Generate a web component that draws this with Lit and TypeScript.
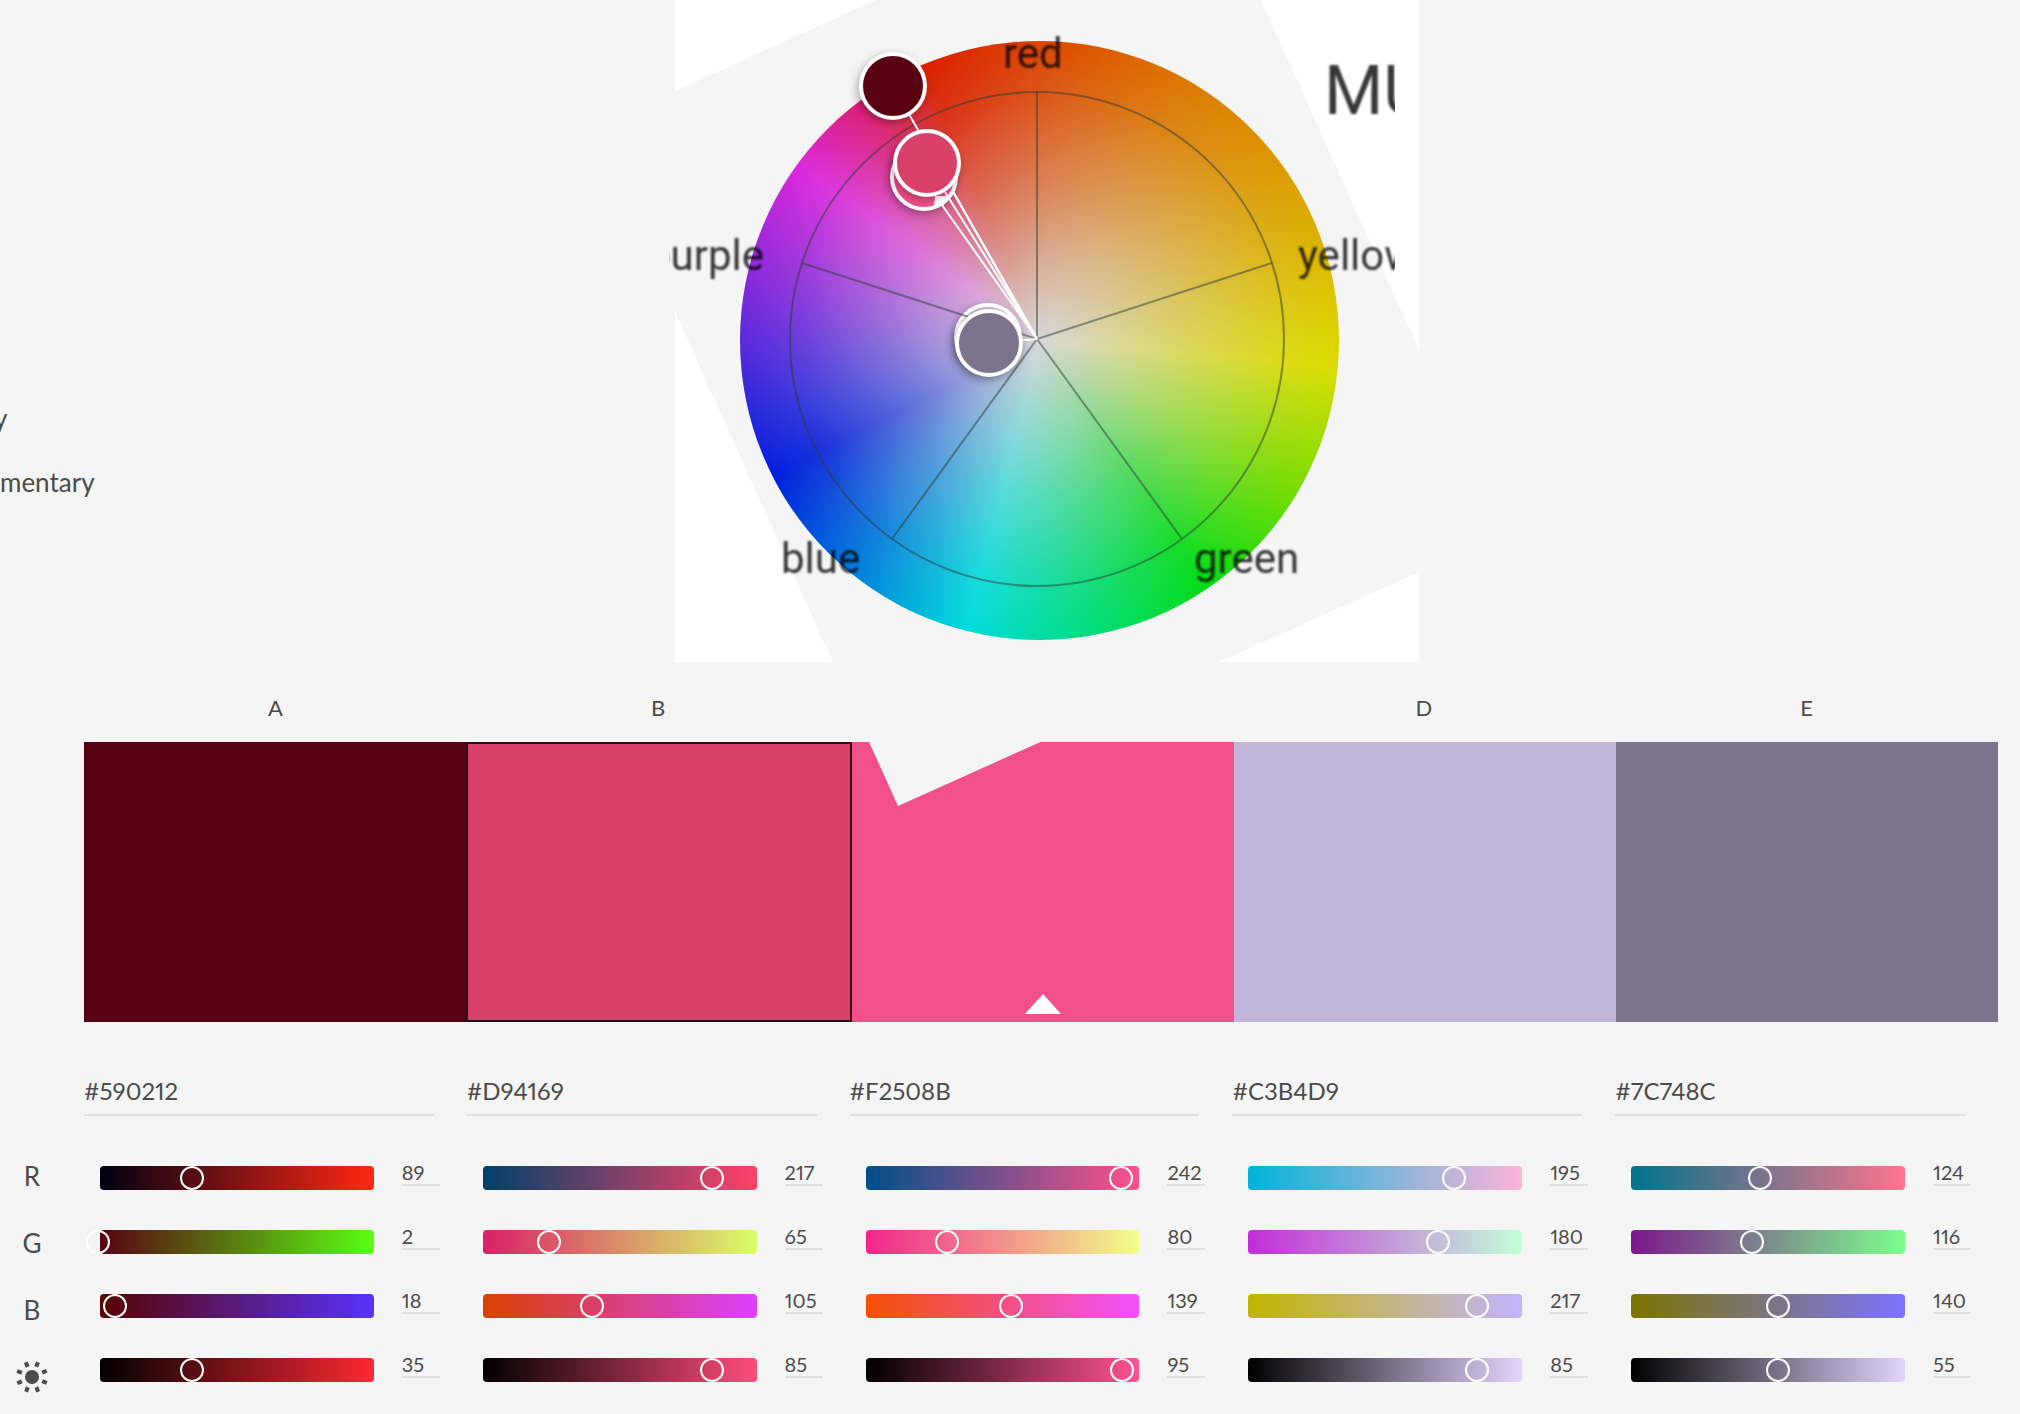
import { LitElement, html, svg, css } from "lit";
import { customElement, state } from "lit/decorators.js";

interface Channel {
  name: string;
  value: number;
  max: number;
  from: string;
  to: string;
}

interface Swatch {
  letter: string;
  hex: string;
  channels: Channel[];
}

const channels = (
  values: number[],
  ramps: [string, string][],
): Channel[] =>
  ["Red", "Green", "Blue", "Brightness"].map((name, i) => ({
    name,
    value: values[i],
    max: i === 3 ? 100 : 255,
    from: ramps[i][0],
    to: ramps[i][1],
  }));

const PALETTE: Swatch[] = [
  {
    letter: "A",
    hex: "#590212",
    channels: channels([89, 2, 18, 35], [
      ["#000012", "#ff2812"],
      ["#590212", "#59ff12"],
      ["#590200", "#5932ff"],
      ["#000000", "#ff2833"],
    ]),
  },
  {
    letter: "B",
    hex: "#D94169",
    channels: channels([217, 65, 105, 85], [
      ["#004169", "#ff4169"],
      ["#d92069", "#d9ff69"],
      ["#d94100", "#d941ff"],
      ["#000000", "#ff4d7b"],
    ]),
  },
  {
    letter: "",
    hex: "#F2508B",
    channels: channels([242, 80, 139, 95], [
      ["#00508b", "#ff508b"],
      ["#f2248b", "#f2ff8b"],
      ["#f25000", "#f250ff"],
      ["#000000", "#ff5492"],
    ]),
  },
  {
    letter: "D",
    hex: "#C3B4D9",
    channels: channels([195, 180, 217, 85], [
      ["#00b4d9", "#ffb4d9"],
      ["#c32cd9", "#c3ffd9"],
      ["#c3b400", "#c3b4ff"],
      ["#000000", "#e5d4ff"],
    ]),
  },
  {
    letter: "E",
    hex: "#7C748C",
    channels: channels([124, 116, 140, 55], [
      ["#00748c", "#ff748c"],
      ["#7c188c", "#7cff8c"],
      ["#7c7400", "#7c74ff"],
      ["#000000", "#e2d4ff"],
    ]),
  },
];

@customElement("color-wheel")
export class ColorWheel extends LitElement {
  static styles = css`
    :host {
      display: block;
      position: relative;
      z-index: 1;
      height: 662px;
      background: #ffffff;
      pointer-events: none;
    }
    .layer {
      position: absolute;
      inset: 0;
      width: 744px;
      height: 662px;
      overflow: visible;
    }
    .disc {
      position: absolute;
      left: 65px;
      top: 41px;
      width: 599px;
      height: 599px;
      border-radius: 50%;
      background:
        radial-gradient(
          closest-side,
          rgba(216, 216, 216, 1) 0%,
          rgba(216, 216, 216, 0.42) 50%,
          rgba(218, 218, 218, 0.12) 80%,
          rgba(220, 220, 220, 0) 100%
        ),
        conic-gradient(
          #dc4600 0deg,
          #dc7800 30deg,
          #dca500 62deg,
          #dcdc00 95deg,
          #78dc00 120deg,
          #00dc14 146deg,
          #00dc8c 174deg,
          #00dcdc 194deg,
          #0078dc 220deg,
          #001edc 243deg,
          #2828dc 256deg,
          #7828dc 278deg,
          #dc28dc 306deg,
          #dc1e78 322deg,
          #dc1e00 337deg,
          #dc4600 360deg
        );
    }
    .word {
      font-family: Roboto, "Liberation Sans", sans-serif;
      font-size: 42px;
      fill: #000000;
    }
    .title {
      font-size: 68px;
    }
    .words {
      opacity: 0.78;
      filter: blur(1px);
    }
    .spokes {
      fill: none;
      stroke: #2c3c38;
      stroke-opacity: 0.5;
      stroke-width: 2px;
    }
    .link {
      stroke: #ffffff;
      stroke-width: 2px;
    }
    .marker {
      stroke: #ffffff;
      stroke-width: 4px;
      filter: drop-shadow(-2px 3px 4px rgba(0, 0, 0, 0.3));
    }
  `;

  private marker(x: number, y: number, fill: string) {
    return svg`<circle class="marker" cx=${x} cy=${y} r="32" fill=${fill} />`;
  }

  render() {
    return html`
      <svg class="layer" viewBox="675 0 744 662" aria-hidden="true">
        <polygon
          fill="#f5f5f5"
          points="675,91 876,0 1261,0 1419,350 1419,572 898,806 675,312"
        />
      </svg>
      <div class="disc"></div>
      <svg class="layer" viewBox="675 0 744 662" role="img" aria-label="Color wheel">
        <defs>
          <clipPath id="frame">
            <rect x="669" y="0" width="726" height="662" />
          </clipPath>
        </defs>
        <g clip-path="url(#frame)">
          <g class="words">
            <text class="word" x="1003" y="68">red</text>
            <text class="word" x="1298" y="270">yellow</text>
            <text class="word" x="1194" y="573">green</text>
            <text class="word" x="781" y="573">blue</text>
            <text class="word" x="764" y="270" text-anchor="end">purple</text>
            <text class="word title" x="1324" y="114">MU</text>
          </g>
        </g>
        ${this.marker(988, 337, "#C3B4D9")}
        <g class="spokes">
          <circle cx="1037" cy="339" r="247" />
          <path
            d="M1037 92V339M1272 263L1037 339M1182 539L1037 339M892 539L1037 339M802 263L1037 339"
          />
        </g>
        <line class="link" x1="1037" y1="339" x2="989" y2="343" />
        ${this.marker(989, 343, "#7C748C")}
        <line class="link" x1="1037" y1="339" x2="893" y2="86" />
        ${this.marker(924, 177, "#F2508B")}
        <line class="link" x1="1037" y1="339" x2="942" y2="205" />
        <line class="link" x1="1037" y1="339" x2="945" y2="192" />
        <line class="link" x1="1037" y1="339" x2="952" y2="190" />
        <path fill="#ffffff" d="M935 196H952L943 205L934 206Z" />
        ${this.marker(927, 163, "#D94169")}
        ${this.marker(893, 86, "#590212")}
      </svg>
    `;
  }
}

@customElement("app-root")
export class AppRoot extends LitElement {
  static styles = css`
    :host {
      display: block;
      min-height: 100vh;
      overflow: hidden;
      background: #f5f5f5;
      color: #4b4b4b;
      font-family: Lato, "Open Sans", sans-serif;
      font-size: 24px;
      font-variant-numeric: proportional-nums;
    }
    * {
      box-sizing: border-box;
    }
    .stage {
      display: grid;
      grid-template-columns: minmax(0, 675fr) 744px minmax(0, 601fr);
    }
    .rules {
      margin: 0;
      padding: 386px 0 0;
      list-style: none;
      font-size: 26px;
      line-height: 64px;
    }
    .rule-short {
      margin-left: -6px;
    }
    .letters,
    .swatches {
      padding: 0 22px 0 84px;
    }
    .letters {
      display: grid;
      grid-template-columns: repeat(5, 1fr);
      height: 80px;
      padding-top: 10px;
      align-items: center;
      text-align: center;
      font-size: 22px;
    }
    .swatches {
      display: flex;
    }
    .swatch {
      display: flex;
      flex: 1 1 0;
      box-sizing: content-box;
      height: 280px;
      padding: 0;
      border: 0;
      align-items: flex-end;
      justify-content: center;
    }
    .selected {
      height: 276px;
      border: 2px solid #330a18;
    }
    .base {
      margin-bottom: 8px;
    }
    .controls {
      display: flex;
      padding-right: 22px;
    }
    .names {
      width: 64px;
      margin-right: 20px;
      padding-top: 120px;
      font-size: 26px;
    }
    .name {
      display: flex;
      height: 67px;
      align-items: center;
      justify-content: center;
    }
    .columns {
      display: grid;
      flex: 1;
      grid-template-columns: repeat(5, minmax(0, 1fr));
    }
    .column {
      display: flex;
      flex-direction: column;
      padding-top: 50px;
    }
    .field {
      padding: 0;
      border: 0;
      border-bottom: 2px solid #e0e0e0;
      border-radius: 0;
      outline: none;
      background: none;
      color: inherit;
      font: inherit;
      font-variant-numeric: inherit;
    }
    .hex {
      height: 44px;
      margin-right: 33px;
      padding-bottom: 6px;
    }
    .rows {
      display: grid;
      gap: 40px;
      padding: 50px 27px 32px 16px;
    }
    .row {
      display: flex;
      height: 24px;
      gap: 28px;
    }
    .track {
      flex: 1;
      height: 24px;
      border-radius: 4px;
    }
    .range {
      display: block;
      width: calc(100% + 24px);
      height: 24px;
      margin: 0 0 0 -16px;
      appearance: none;
      background: none;
      outline: none;
    }
    .range::-webkit-slider-thumb {
      appearance: none;
      width: 24px;
      height: 24px;
      border: 2px solid #ffffff;
      border-radius: 50%;
      background: transparent;
    }
    .value {
      width: 38px;
      height: 28px;
      margin-top: -8px;
      padding-top: 2px;
      font-size: 20px;
    }
  `;

  @state() private palette: Swatch[] = PALETTE;

  private onInput(channel: Channel, event: Event) {
    channel.value = Number((event.target as HTMLInputElement).value);
    this.palette = [...this.palette];
  }

  private renderSwatch(swatch: Swatch, index: number) {
    return html`
      <button
        class="swatch ${index === 1 ? "selected" : ""}"
        style="background-color:${swatch.hex}"
        aria-label=${swatch.hex}
      >
        ${index === 2
          ? html`<svg class="base" width="36" height="20" viewBox="0 0 36 20" aria-hidden="true">
              <path fill="#ffffff" d="M18 0L36 20H0Z" />
            </svg>`
          : null}
      </button>
    `;
  }

  private renderChannel(swatch: Swatch, channel: Channel) {
    const label = `${channel.name} ${swatch.hex}`;
    return html`
      <div class="row">
        <div
          class="track"
          style="background-image:linear-gradient(90deg, ${channel.from}, ${channel.to})"
        >
          <input
            class="range"
            type="range"
            min="0"
            max=${channel.max}
            .value=${String(channel.value)}
            aria-label=${label}
            @input=${(e: Event) => this.onInput(channel, e)}
          />
        </div>
        <input
          class="field value"
          type="text"
          .value=${String(channel.value)}
          aria-label=${label}
          @change=${(e: Event) => this.onInput(channel, e)}
        />
      </div>
    `;
  }

  private renderSun() {
    const rays = [0, 1, 2, 3, 4, 5, 6, 7].map(
      (i) => svg`<path
        d="M0 -11V-16"
        stroke="#4b4b4b"
        stroke-width="4"
        transform="rotate(${22 + i * 45})"
      />`,
    );
    return html`<svg width="34" height="34" viewBox="-17 -17 34 34" role="img" aria-label="Brightness">
      <circle r="7" fill="#4b4b4b" />
      ${rays}
    </svg>`;
  }

  render() {
    return html`
      <section class="stage">
        <ul class="rules">
          <li class="rule-short">y</li>
          <li>mentary</li>
        </ul>
        <color-wheel></color-wheel>
      </section>
      <div class="letters">
        ${this.palette.map((s) => html`<span>${s.letter}</span>`)}
      </div>
      <div class="swatches">
        ${this.palette.map((s, i) => this.renderSwatch(s, i))}
      </div>
      <section class="controls">
        <div class="names">
          <div class="name">R</div>
          <div class="name">G</div>
          <div class="name">B</div>
          <div class="name">${this.renderSun()}</div>
        </div>
        <div class="columns">
          ${this.palette.map(
            (s) => html`
              <div class="column">
                <input class="field hex" type="text" .value=${s.hex} aria-label="Hex ${s.hex}" />
                <div class="rows">
                  ${s.channels.map((c) => this.renderChannel(s, c))}
                </div>
              </div>
            `,
          )}
        </div>
      </section>
    `;
  }
}
